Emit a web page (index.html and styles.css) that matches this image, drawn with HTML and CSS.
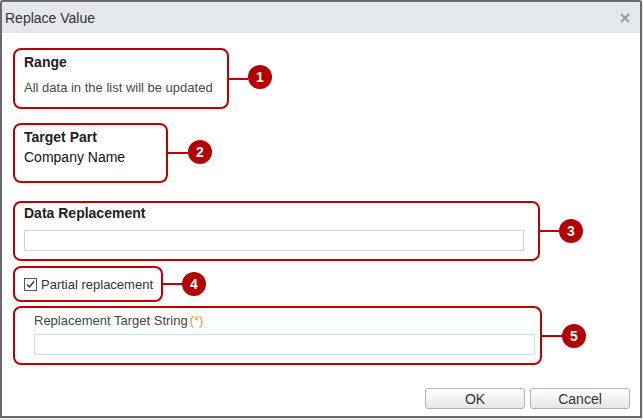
FILE: index.html
```html
<!DOCTYPE html>
<html lang="en">
<head>
  <meta charset="UTF-8">
  <title>Replace Value</title>
  <link rel="stylesheet" href="styles.css">
</head>
<body>
  <div class="dialog">
    <div class="dialog-head">
      <span class="dialog-title">Replace Value</span>
      <svg class="close" width="10" height="10" viewBox="0 0 10 10"><path d="M1 1L9 9M9 1L1 9" stroke="#9a9a9a" stroke-width="2"/></svg>
    </div>
    <div class="dialog-body">
      <div class="row row-range">
        <div class="mark box-range">
          <div class="label">Range</div>
          <div class="note">All data in the list will be updated</div>
        </div>
        <span class="wire"></span><span class="num">1</span>
      </div>
      <div class="row row-part">
        <div class="mark box-part">
          <div class="label">Target Part</div>
          <div class="value">Company Name</div>
        </div>
        <span class="wire"></span><span class="num">2</span>
      </div>
      <div class="row row-data">
        <div class="mark box-data">
          <div class="label">Data Replacement</div>
          <input type="text" class="field">
        </div>
        <span class="wire"></span><span class="num">3</span>
      </div>
      <div class="row row-partial">
        <div class="mark box-partial">
          <span class="check"><svg width="11" height="11" viewBox="0 0 11 11"><path d="M2 5.5L4.5 8L9 2.5" fill="none" stroke="#333" stroke-width="1.4"/></svg></span>
          <span class="check-text">Partial replacement</span>
        </div>
        <span class="wire"></span><span class="num">4</span>
      </div>
      <div class="row row-target">
        <div class="mark box-target">
          <div class="sub-label">Replacement Target String<span class="req">(*)</span></div>
          <input type="text" class="field field-blue">
        </div>
        <span class="wire"></span><span class="num">5</span>
      </div>
      <div class="actions">
        <button class="btn">OK</button>
        <button class="btn">Cancel</button>
      </div>
    </div>
  </div>
</body>
</html>
```

FILE: styles.css
```css
body { margin: 0; background: #e9e9e9; font-family: "Liberation Sans", Arial, sans-serif; color: #222; }
.dialog { width: 642px; height: 418px; box-sizing: border-box; background: #fff; border: 2px solid #6a6a6a; border-radius: 3px 3px 0 0; }
.dialog-head { height: 31px; background: #e4e7eb; display: flex; align-items: center; justify-content: space-between; padding: 0 10px 0 3px; }
.dialog-title { font-family: "Liberation Sans Narrow", "Liberation Sans", Arial, sans-serif; font-size: 14px; color: #333; }
.close { display: block; }
.dialog-body { padding: 15px 10px 0 11px; }
.row { display: flex; align-items: center; }
.mark { box-sizing: border-box; border: 2px solid #c00000; border-radius: 8px; padding: 4px 9px 0; }
.wire { width: 19px; height: 2px; background: #c00000; }
.num { width: 24px; height: 24px; border-radius: 50%; background: #b40000; color: #fff; font-weight: bold; font-size: 14px; display: flex; align-items: center; justify-content: center; }
.label { font-weight: bold; font-size: 14px; line-height: 16px; color: #222; }
.note { font-size: 13px; line-height: 16px; color: #4a4a4a; margin-top: 10px; }
.value { font-size: 14px; line-height: 16px; color: #111; margin-top: 4px; }
.box-range { width: 216px; height: 61px; }
.row-range .num { margin-top: -4px; }
.row-part { margin-top: 14px; }
.row-part .num { margin-top: -3px; }
.box-part { width: 155px; height: 60px; }
.row-part .wire { width: 20px; }
.row-data { margin-top: 18px; }
.box-data { width: 527px; height: 60px; padding-top: 2px; }
.field { display: block; box-sizing: border-box; width: 500px; height: 21px; margin: 9px 0 0; border: 1px solid #d6d6d6; padding: 0 4px; background: #fff; }
.row-partial { margin-top: 5px; }
.box-partial { width: 150px; height: 36px; padding: 0 0 0 9px; display: flex; align-items: center; }
.check { width: 13px; height: 13px; box-sizing: border-box; border: 1px solid #555; display: flex; align-items: center; justify-content: center; margin-right: 4px; }
.check svg { display: block; }
.check-text { font-size: 13px; color: #333; }
.row-target { margin-top: 4px; }
.row-target .wire { width: 20px; }
.box-target { width: 529px; height: 59px; padding: 5px 0 0 19px; }
.sub-label { font-size: 13px; line-height: 15px; color: #444; }
.req { color: #f7931e; margin-left: 2px; }
.field-blue { width: 501px; height: 21px; margin-top: 6px; border-color: #c9e3f5; }
.actions { display: flex; justify-content: flex-end; gap: 5px; margin-top: 23px; }
.btn { width: 100px; height: 21px; box-sizing: border-box; border: 1px solid #b2b2b2; border-radius: 3px; background: linear-gradient(#ffffff, #e6e6e6); font-family: "Liberation Sans", Arial, sans-serif; font-size: 14px; color: #333; padding: 0; }
```
